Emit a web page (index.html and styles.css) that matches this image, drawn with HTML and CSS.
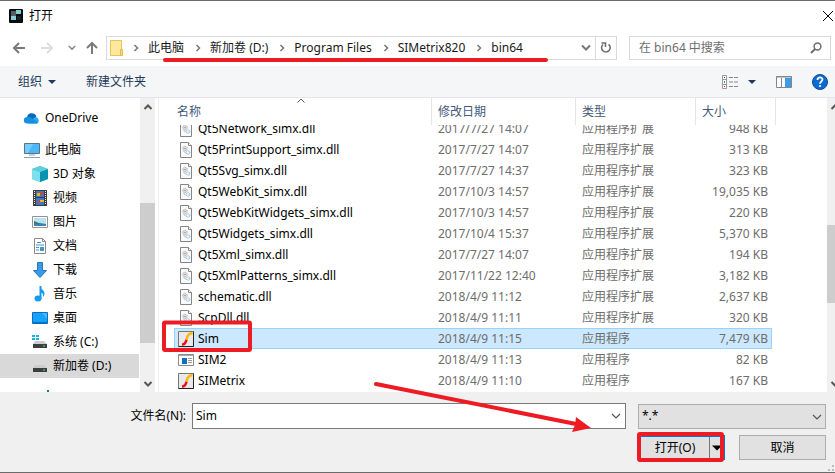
FILE: index.html
```
<!DOCTYPE html>
<html lang="zh-CN">
<head>
<meta charset="utf-8">
<title>打开</title>
<link rel="stylesheet" href="styles.css">
</head>
<body>
<svg class="defs" aria-hidden="true">
  <symbol id="dll" viewBox="0 0 16 16">
    <path d="M2.5.5h8l3 3v12h-11z" fill="#fafafa" stroke="#858585"/>
    <path d="M10.500.5v3h3" fill="#fff" stroke="#858585"/>
    <circle cx="7" cy="6.500" r="2.200" fill="#e4e4e4" stroke="#a3a8ac" stroke-dasharray="1.200 .6"/>
    <circle cx="7" cy="6.500" r=".7" fill="#888"/>
    <circle cx="10" cy="10.500" r="1.800" fill="#e4f2fb" stroke="#8fbcd8" stroke-dasharray="1.200 .6"/>
    <path d="M5.500 9l2.500 2.500" stroke="#b0b0b0"/>
  </symbol>
  <symbol id="simx" viewBox="0 0 16 16">
    <path d="M.5.5h15v15H.5z" fill="#e9e9e9" stroke="#777"/>
    <path d="M.5 15.500h15V.5" fill="none" stroke="#222"/>
    <path d="M4 13.500c3 0 4-2 4.500-5" fill="none" stroke="#f00b1c" stroke-width="2.500"/>
    <path d="M8.500 8.500C9 5 10.500 2.500 14.500 2" fill="none" stroke="#ffb800" stroke-width="2.500"/>
  </symbol>
  <symbol id="crumb" viewBox="0 0 24 12">
    <path d="M10.500 3l3 3-3 3" fill="none" stroke="#777" stroke-width="1.500"/>
  </symbol>
  <symbol id="down" viewBox="0 0 10 10">
    <path d="M1 3l4 4 4-4" fill="none" stroke="currentColor" stroke-width="1.200"/>
  </symbol>
  <symbol id="thick-down" viewBox="0 0 10 10">
    <path d="M1 2.500l4 4 4-4" fill="none" stroke="currentColor" stroke-width="2"/>
  </symbol>
  <symbol id="triangle" viewBox="0 0 8 8"><path d="M0 2h8L4 6z" fill="currentColor"/></symbol>
</svg>

<div class="dialog">
  <header class="title-bar">
    <svg class="app-icon" viewBox="0 0 14 14" aria-hidden="true"><rect width="14" height="14" rx="1" fill="#080c0e"/><path d="M2 2h5v5H2z" fill="#506060"/><path d="M7 1h5v4H7zM2 7h5v4H2z" fill="#86cbd0"/><path d="M8 7h4v4H8z" fill="#172226"/></svg>
    <span class="title">打开</span>
    <button class="bare close" aria-label="关闭"><svg width="10" height="10" viewBox="0 0 10 10"><path d="M0 0l10 10M10 0L0 10" stroke="#000"/></svg></button>
  </header>

  <div class="address-row">
    <div class="history">
      <button class="bare" aria-label="后退"><svg width="14" height="12" viewBox="0 0 14 12"><path d="M13 6H2M7 1L2 6l5 5" fill="none" stroke="#7a7a7a" stroke-width="2"/></svg></button>
      <button class="bare" aria-label="前进"><svg width="14" height="12" viewBox="0 0 14 12"><path d="M1 6h11M7 1l5 5-5 5" fill="none" stroke="#ddd" stroke-width="2"/></svg></button>
      <button class="bare recent" aria-label="最近位置"><svg width="8" height="8"><use href="#thick-down"/></svg></button>
      <button class="bare" aria-label="上移"><svg width="12" height="14" viewBox="0 0 12 14"><path d="M6 13V3M1 7l5-5 5 5" fill="none" stroke="#7a7a7a" stroke-width="2"/></svg></button>
    </div>
    <nav class="crumbs" aria-label="路径">
      <svg width="14" height="17" viewBox="0 0 14 17" aria-hidden="true"><path d="M.5.5h11v15H.5z" fill="#ffe79b" stroke="#e9c35c"/><path d="M10.500 9.500h2v6h-2z" fill="#ffe28a" stroke="#e6b93f"/></svg>
      <svg class="sep" aria-hidden="true"><use href="#crumb"/></svg><a href="#">此电脑</a>
      <svg class="sep" aria-hidden="true"><use href="#crumb"/></svg><a href="#">新加卷 (D:)</a>
      <svg class="sep" aria-hidden="true"><use href="#crumb"/></svg><a href="#">Program Files</a>
      <svg class="sep" aria-hidden="true"><use href="#crumb"/></svg><a href="#">SIMetrix820</a>
      <svg class="sep" aria-hidden="true"><use href="#crumb"/></svg><a href="#">bin64</a>
      <button class="bare drop" aria-label="以前的位置"><svg width="10" height="10"><use href="#thick-down"/></svg></button>
      <button class="bare refresh" aria-label="刷新"><svg width="12" height="12" viewBox="0 0 12 12"><path d="M3 2.500a4.300 4.300 0 1 0 5.500-.2" fill="none" stroke="#6e6e6e" stroke-width="1.600"/><path d="M1.500 1h4v4" fill="none" stroke="#6e6e6e" stroke-width="1.600"/></svg></button>
    </nav>
    <div class="search">
      <input type="search" aria-label="搜索" placeholder="在 bin64 中搜索">
      <svg width="12" height="12" viewBox="0 0 12 12" aria-hidden="true"><circle cx="7.500" cy="4.500" r="3.400" fill="none" stroke="#6e6e6e" stroke-width="1.500"/><path d="M5 7L1 11" stroke="#6e6e6e" stroke-width="2"/></svg>
    </div>
  </div>

  <div class="command-bar">
    <button class="bare command">组织 <svg width="8" height="8"><use href="#triangle"/></svg></button>
    <button class="bare command">新建文件夹</button>
    <div class="view-tools">
      <button class="bare view" aria-label="更改视图">
        <svg width="16" height="14" viewBox="0 0 16 14"><path d="M.5.500h4v13h-4zM.5 4.500h4M.5 9.500h4" fill="#fff" stroke="#999"/><path d="M7 2.500h9M7 7h9M7 11.500h9" stroke="#888" stroke-dasharray="4 1"/><path d="M2 2h1v1H2z" fill="#444"/><path d="M2 6h1v2H2z" fill="#2b8ce0"/><path d="M2 11h1v1H2z" fill="#d22"/></svg>
        <svg width="8" height="8"><use href="#triangle"/></svg>
      </button>
      <button class="bare" aria-label="预览窗格"><svg width="16" height="12" viewBox="0 0 16 12"><path d="M.5.500h15v11H.5z" fill="#fff" stroke="#858585"/><path d="M0 1h16M5.500 2v9" stroke="#858585"/><path d="M9 2h6v9H9z" fill="#3e9be8"/></svg></button>
      <button class="bare" aria-label="帮助"><svg width="16" height="16" viewBox="0 0 16 16"><circle cx="8" cy="8" r="7.500" fill="#0b6bd0" stroke="#064f9d"/><path d="M5.500 6c0-3.500 5-3.300 5-.4C10.500 7.500 8 7.500 8 9.800" fill="none" stroke="#fff" stroke-width="1.800"/><circle cx="8" cy="12" r="1.100" fill="#fff"/></svg></button>
    </div>
  </div>

  <main class="browser">
    <ul class="tree">
      <li class="root cloud"><svg class="icon" viewBox="0 0 16 16" aria-hidden="true"><path d="M3 8a5 5 0 0 1 9.500-2L9 11z" fill="#0869bc"/><path d="M4 13.500l7-6.500a3.500 3.500 0 0 1 2 6.500z" fill="#28a8ea"/><path d="M3 13.500A3.200 3.200 0 0 1 3 7l3 0 8 5.500-1 1z" fill="#1490df"/></svg>OneDrive</li>
      <li class="root"><svg class="icon" viewBox="0 0 16 16" aria-hidden="true"><path d="M.5 1.500h15v10H.5z" fill="#4bb8fa" stroke="#587381"/><path d="M1 2h8L4 11H1z" fill="#75ccff"/><path d="M5 13h6M0 15.500h16" stroke="#8fa0aa"/></svg>此电脑</li>
      <li><svg class="icon" viewBox="0 0 16 16" aria-hidden="true"><path d="M8 0l8 3v10l-8 3-8-3V3z" fill="#38bfd4"/><path d="M0 3l8 3v10l-8-3z" fill="#7be0e8"/><path d="M8 6l8-3v10l-8 3z" fill="#0793b1"/><path d="M0 3l8-3 8 3-8 3z" fill="#5ccfdd"/></svg>3D 对象</li>
      <li><svg class="icon" viewBox="0 0 16 16" aria-hidden="true"><path d="M1 0h14v16H1z" fill="#3d3d3d"/><path d="M4 1h8v6H4zM4 8h8v7H4z" fill="#3978cc"/><path d="M5 3h3v3H5zM8 10h4v2H8z" fill="#f2b21d"/><path d="M8 2h3v3H8zM5 11h3v2H5z" fill="#d84333"/><path d="M2.500 1v14M13.500 1v14" stroke="#eee" stroke-dasharray="1 1"/></svg>视频</li>
      <li><svg class="icon" viewBox="0 0 16 16" aria-hidden="true"><path d="M.5 2.500h15v11H.5z" fill="#fff" stroke="#929292"/><path d="M2 4h12v8H2z" fill="#b7e1f6"/><path d="M2 7l5 2 7 1v2H2z" fill="#347c77"/><path d="M2 10h12v2H2z" fill="#3d80b3"/></svg>图片</li>
      <li><svg class="icon" viewBox="0 0 16 16" aria-hidden="true"><path d="M2.500.5h8l3 3v12h-11z" fill="#fff" stroke="#888"/><path d="M10.500.5v3h3" fill="none" stroke="#888"/><path d="M5 4.500h4M4 7h8M4 9.500h3M4 12h3" stroke="#3b94cb"/><path d="M8 9h4v4H8z" fill="#4496bd"/></svg>文档</li>
      <li><svg class="icon" viewBox="0 0 16 16" aria-hidden="true"><path d="M5.500.5h5v8h4L8 15.500 1.500 8.500h4z" fill="#3799e8" stroke="#2675be"/></svg>下载</li>
      <li><svg class="icon" viewBox="0 0 16 16" aria-hidden="true"><ellipse cx="6" cy="12.500" rx="3.500" ry="3" fill="#159af0"/><path d="M8.500 13V0" stroke="#159af0" stroke-width="2"/><path d="M8 0c1 4 5 4 4.500 8-.2 1-.5 2-1.500 3 .5-4-1-4-3-5z" fill="#159af0"/></svg>音乐</li>
      <li><svg class="icon" viewBox="0 0 16 16" aria-hidden="true"><path d="M.5 2.500h15v11H.5z" fill="#16a1ff" stroke="#0870b9"/><path d="M10 3h5v6z" fill="#45b7ff"/><path d="M1 12.500h14" stroke="#0f70b8"/></svg>桌面</li>
      <li><svg class="icon" viewBox="0 0 16 16" aria-hidden="true"><path d="M0 1h3v2H0zM4 1h3v2H4zM0 4h3v2H0zM4 4h3v2H4z" fill="#16b0ea"/><path d="M3 7h9l3 3H1z" fill="#ccc"/><path d="M1 10h14v4H1z" fill="#3b3f40"/><path d="M11 12h2" stroke="#5ddb6a"/></svg>系统 (C:)</li>
      <li class="selected"><svg class="icon" viewBox="0 0 16 16" aria-hidden="true"><path d="M3 7h9l3 3H1z" fill="#ccc"/><path d="M1 10h14v4H1z" fill="#3b3f40"/><path d="M11 12h2" stroke="#5ddb6a"/></svg>新加卷 (D:)</li>
      <li class="partial" aria-hidden="true"><svg class="icon" viewBox="0 0 16 16"><path d="M7 0h2v2H7z" fill="#16739f"/></svg></li>
    </ul>
    <div class="scrollbar">
      <svg width="10" height="10" viewBox="0 0 10 10" aria-hidden="true"><path d="M1.500 7L5 3.500 8.500 7" fill="none" stroke="#555" stroke-width="2"/></svg>
      <div class="track"><div class="thumb tree-thumb"></div></div>
      <svg width="10" height="10" viewBox="0 0 10 10" aria-hidden="true"><path d="M1.500 3L5 6.500 8.500 3" fill="none" stroke="#555" stroke-width="2"/></svg>
    </div>
    <div class="files">
      <svg class="sort" width="8" height="5" viewBox="0 0 8 5" aria-hidden="true"><path d="M.5 4.500L4 1l3.500 3.500" fill="none" stroke="#555"/></svg>
      <table>
        <colgroup><col><col class="date-col"><col class="type-col"><col class="size-col"></colgroup>
        <thead><tr><th>名称</th><th>修改日期</th><th>类型</th><th>大小</th></tr></thead>
        <tbody>
          <tr class="cut"><td><div><svg class="icon"><use href="#dll"/></svg>Qt5Network_simx.dll</div></td><td><div>2017/7/27 14:07</div></td><td><div>应用程序扩展</div></td><td><div>948 KB</div></td></tr>
          <tr><td><div><svg class="icon"><use href="#dll"/></svg>Qt5PrintSupport_simx.dll</div></td><td>2017/7/27 14:07</td><td>应用程序扩展</td><td>313 KB</td></tr>
          <tr><td><div><svg class="icon"><use href="#dll"/></svg>Qt5Svg_simx.dll</div></td><td>2017/7/27 14:37</td><td>应用程序扩展</td><td>323 KB</td></tr>
          <tr><td><div><svg class="icon"><use href="#dll"/></svg>Qt5WebKit_simx.dll</div></td><td>2017/10/3 14:57</td><td>应用程序扩展</td><td>19,035 KB</td></tr>
          <tr><td><div><svg class="icon"><use href="#dll"/></svg>Qt5WebKitWidgets_simx.dll</div></td><td>2017/10/3 14:57</td><td>应用程序扩展</td><td>220 KB</td></tr>
          <tr><td><div><svg class="icon"><use href="#dll"/></svg>Qt5Widgets_simx.dll</div></td><td>2017/10/4 15:37</td><td>应用程序扩展</td><td>5,370 KB</td></tr>
          <tr><td><div><svg class="icon"><use href="#dll"/></svg>Qt5Xml_simx.dll</div></td><td>2017/7/27 14:07</td><td>应用程序扩展</td><td>194 KB</td></tr>
          <tr><td><div><svg class="icon"><use href="#dll"/></svg>Qt5XmlPatterns_simx.dll</div></td><td>2017/11/22 12:40</td><td>应用程序扩展</td><td>3,182 KB</td></tr>
          <tr><td><div><svg class="icon"><use href="#dll"/></svg>schematic.dll</div></td><td>2018/4/9 11:12</td><td>应用程序扩展</td><td>2,637 KB</td></tr>
          <tr><td><div><svg class="icon"><use href="#dll"/></svg>ScpDll.dll</div></td><td>2018/4/9 11:11</td><td>应用程序扩展</td><td>320 KB</td></tr>
          <tr class="picked"><td><div><svg class="icon"><use href="#simx"/></svg>Sim</div></td><td>2018/4/9 11:15</td><td>应用程序</td><td>7,479 KB</td></tr>
          <tr><td><div><svg class="icon" viewBox="0 0 16 16"><path d="M.5 2.500h15v11H.5z" fill="#fff" stroke="#8b8b8b"/><path d="M1 3.500h14" stroke="#aaa"/><path d="M4 6h5v6H4z" fill="#126ec3"/><path d="M10 6.500h4M10 8.500h4M10 10.500h4" stroke="#999"/></svg>SIM2</div></td><td>2018/4/9 11:13</td><td>应用程序</td><td>82 KB</td></tr>
          <tr><td><div><svg class="icon"><use href="#simx"/></svg>SIMetrix</div></td><td>2018/4/9 11:10</td><td>应用程序</td><td>167 KB</td></tr>
        </tbody>
      </table>
    </div>
    <div class="scrollbar edge">
      <svg width="10" height="10" viewBox="0 0 10 10" aria-hidden="true"><path d="M1.500 7L5 3.500 8.500 7" fill="none" stroke="#555" stroke-width="2"/></svg>
      <div class="track"><div class="thumb file-thumb"></div></div>
      <svg width="10" height="10" viewBox="0 0 10 10" aria-hidden="true"><path d="M1.500 3L5 6.500 8.500 3" fill="none" stroke="#555" stroke-width="2"/></svg>
    </div>
  </main>

  <footer class="actions">
    <div class="field-row">
      <label for="filename">文件名(N):</label>
      <div class="combo"><input id="filename" type="text" value="Sim"><button class="bare" aria-label="文件列表"><svg width="10" height="10"><use href="#down"/></svg></button></div>
      <div class="filter"><select aria-label="文件类型"><option>*.*</option></select><svg width="10" height="10" aria-hidden="true"><use href="#down"/></svg></div>
    </div>
    <div class="button-row">
      <div class="split"><button class="open">打开(O)</button><button class="more" aria-label="更多打开方式"><svg width="10" height="10"><use href="#triangle"/></svg></button></div>
      <button class="cancel">取消</button>
    </div>
    <svg class="grip" width="6" height="6" viewBox="0 0 6 6" aria-hidden="true"><path d="M4 0h2v2H4zM0 4h2v2H0zM4 4h2v2H4z" fill="#bbb"/></svg>
  </footer>

  <svg class="marks" width="835" height="473" viewBox="0 0 835 473" aria-hidden="true">
    <path d="M165 60H546" stroke-width="4" stroke-linecap="round"/>
    <rect x="164" y="322.500" width="86" height="27.500" rx="1" stroke-width="4"/>
    <rect x="639" y="434" width="83" height="26" rx="1" stroke-width="4"/>
    <path d="M376 384L576 424" stroke-width="4" stroke-linecap="round"/>
    <path d="M576 417l15 11-19 4 3-7z" fill="#ed1c24" stroke="none"/>
  </svg>
</div>
</body>
</html>
```
FILE: styles.css
```
* { box-sizing: border-box; }

body {
  margin: 0;
  font: 12px/20px "Noto Sans", "Noto Sans CJK SC", sans-serif;
  color: #000;
}

button, input, select { font: inherit; color: inherit; }
svg { display: block; flex: none; }
.defs { position: absolute; width: 0; height: 0; }
.icon { width: 16px; height: 16px; }

.bare {
  display: flex;
  align-items: center;
  justify-content: center;
  padding: 0;
  border: 0;
  background: none;
}

.dialog {
  position: relative;
  display: flex;
  flex-direction: column;
  height: 100vh;
  overflow: hidden;
  background: #fff;
  border-top: 1px solid #6b6b6b;
  border-bottom: 1px solid #6b6b6b;
}

.title-bar {
  display: flex;
  align-items: center;
  gap: 6px;
  height: 29px;
  padding: 0 2px 0 9px;
}
.app-icon { width: 14px; height: 14px; }
.close { margin-left: auto; }

.address-row {
  display: flex;
  align-items: center;
  height: 36px;
  padding-right: 4px;
}
.history {
  display: flex;
  align-items: center;
  gap: 14px;
  width: 106px;
  padding-left: 12px;
  color: #888;
}
.recent { margin-right: -4px; }

.crumbs {
  display: flex;
  flex: 1;
  align-items: center;
  height: 24px;
  padding-left: 3px;
  border: 1px solid #d9d9d9;
}
.crumbs a { padding-right: 2px; color: #1a1a1a; text-decoration: none; }
.sep { width: 24px; height: 12px; }
.drop { width: 18px; height: 22px; margin-left: auto; color: #777; }
.refresh { width: 21px; height: 22px; border-left: 1px solid #d9d9d9; }

.search {
  display: flex;
  align-items: center;
  width: 202px;
  height: 24px;
  margin-left: 12px;
  padding: 0 8px 0 9px;
  border: 1px solid #d9d9d9;
}
.search input {
  flex: 1;
  min-width: 0;
  padding: 0;
  border: 0;
  outline: 0;
  background: none;
}
.search input::placeholder { color: #6d6d6d; opacity: 1; }

.command-bar {
  display: flex;
  align-items: center;
  gap: 30px;
  height: 32px;
  padding: 0 7px 0 18px;
  background: #f5f6f7;
  border-bottom: 1px solid #e3e5e8;
  color: #1e395b;
}
.command { gap: 6px; }
.view-tools { display: flex; align-items: center; gap: 20px; margin-left: auto; }
.view { gap: 10px; }

.browser { display: flex; flex: 1; min-height: 0; overflow: hidden; }

.tree {
  width: 139px;
  margin: 0;
  padding: 8px 0 0;
  overflow: hidden;
  list-style: none;
}
.tree li {
  display: flex;
  align-items: center;
  gap: 5px;
  height: 24px;
  padding-left: 32px;
}
.tree .root { padding-left: 24px; }
.tree .cloud { margin-bottom: 8px; }
.tree .selected { background: #d9d9d9; }
.tree .partial { height: 40px; padding-left: 40px; }

.scrollbar {
  display: flex;
  flex-direction: column;
  align-items: center;
  width: 15px;
  margin: 0 3px 0 1px;
  padding: 4px 0 3px;
  background: #f0f0f0;
}
.track { flex: 1; width: 100%; }
.thumb { background: #cdcdcd; }
.tree-thumb { height: 140px; margin-top: 91px; }
.file-thumb { height: 78px; margin-top: 113px; }
.edge {
  align-items: flex-start;
  width: 8px;
  margin: 0;
  padding-left: 3px;
  overflow: hidden;
}
.edge .track { margin-left: -3px; width: 8px; }

.files {
  position: relative;
  flex: 1;
  min-width: 0;
  padding: 0 55px 0 15px;
  overflow: hidden;
  border-left: 1px solid #eee;
}
.sort { position: absolute; top: 0; left: 138px; }

table {
  width: 100%;
  table-layout: fixed;
  border-collapse: separate;
  border-spacing: 0;
}
.date-col { width: 144px; }
.type-col { width: 120px; }
.size-col { width: 76px; }
th {
  position: relative;
  height: 27px;
  padding: 0 6px;
  border-right: 1px solid #e5e5e5;
  color: #43597a;
  font-weight: 400;
  text-align: left;
}
th:first-child { padding-left: 3px; }
th:last-child { border-right: 0; }
th:last-child::after {
  content: "";
  position: absolute;
  top: 0;
  right: -4px;
  bottom: 0;
  width: 1px;
  background: #e5e5e5;
}
td {
  height: 21px;
  padding: 0 6px;
  color: #6d6d6d;
  line-height: 21px;
  white-space: nowrap;
}
td:first-child { padding-left: 4px; color: #000; }
td:last-child { padding-right: 4px; text-align: right; }
td:first-child div { display: flex; align-items: center; gap: 4px; height: 21px; }
/* Row scrolled partly under the header: only its lower part shows. */
.cut td { height: 14px; }
.cut td div,
.cut td:first-child div {
  display: flex;
  align-items: flex-end;
  height: 14px;
  overflow: hidden;
}
.cut td:last-child div { justify-content: flex-end; }
.cut .icon { margin-bottom: 2px; }
.picked td { background: #cce8ff; }
.picked { outline: 1px solid #99d1ff; outline-offset: -1px; }

.actions {
  position: relative;
  padding: 11px 9px 12px 0;
  background: #f0f0f0;
}
.field-row { display: flex; align-items: center; }
.field-row label { width: 192px; padding-right: 6px; text-align: right; }
.combo {
  display: flex;
  flex: 1;
  height: 26px;
  background: #fff;
  border: 1px solid #7a7a7a;
}
.combo input {
  flex: 1;
  min-width: 0;
  padding: 0 3px;
  border: 0;
  outline: 0;
  background: none;
}
.combo .bare { width: 18px; color: #555; }
.filter { position: relative; width: 188px; margin-left: 12px; }
.filter select {
  display: block;
  appearance: none;
  width: 100%;
  height: 25px;
  padding: 0 3px;
  border: 1px solid #adadad;
  border-radius: 0;
  background: #e1e1e1;
}
.filter svg { position: absolute; top: 8px; right: 4px; color: #555; }

.button-row {
  display: flex;
  justify-content: flex-end;
  gap: 14px;
  padding-top: 6px;
}
.button-row button { padding: 0; border: 0; background: #e1e1e1; }
.split {
  display: flex;
  width: 86px;
  height: 25px;
  border: 2px solid #0078d7;
}
.split .open { flex: 1; }
.button-row .more {
  display: flex;
  align-items: center;
  justify-content: center;
  width: 14px;
  border-left: 1px solid #777;
}
.button-row .cancel { width: 87px; height: 25px; border: 1px solid #adadad; }
.grip { position: absolute; right: 1px; bottom: 1px; }

.marks {
  position: absolute;
  top: -1px;
  left: 0;
  fill: none;
  stroke: #ed1c24;
  pointer-events: none;
}
```
